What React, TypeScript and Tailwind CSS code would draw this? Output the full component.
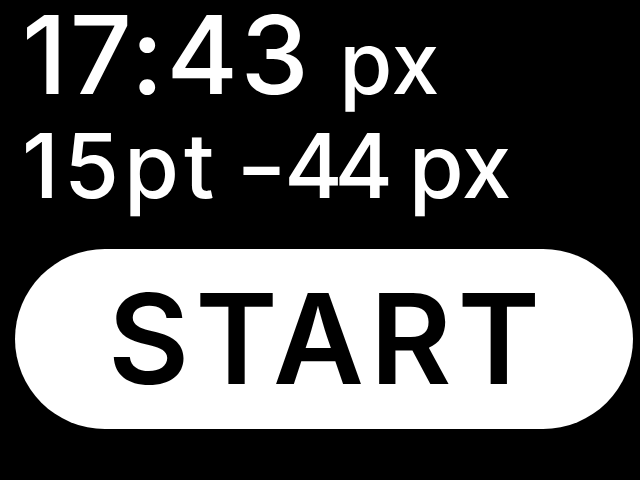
export default function App() {
  return (
    <div
      className="w-[640px] h-[480px] bg-black text-white overflow-hidden"
      style={{ fontFamily: "Inter, 'Noto Sans', sans-serif" }}
    >
      <div className="pl-[22px] leading-[1.05] font-medium">
        <div className="whitespace-nowrap -mt-[3px]">
          <span className="text-[109px] tracking-[2.5px]">17:43</span>
          <span className="text-[86px] ml-[28px] tracking-[1px]">px</span>
        </div>
        <div className="mt-[8px] text-[89px] whitespace-nowrap [word-spacing:-8px]">
          <span className="tracking-[5px]">15pt</span>{" "}
          <span className="inline-block scale-x-125 ml-[6px]">-</span>
          <span className="tracking-[-8px] ml-[2px]">44</span>{" "}
          <span className="tracking-[0px] ml-[8px]">px</span>
        </div>
      </div>
      <div className="px-[15px] mt-[36px]">
        <button className="w-[618px] h-[180px] rounded-full bg-white text-black flex items-center justify-center">
          <span className="text-[125px] leading-none font-semibold tracking-[6px] pl-[6px]">
            START
          </span>
        </button>
      </div>
    </div>
  );
}
